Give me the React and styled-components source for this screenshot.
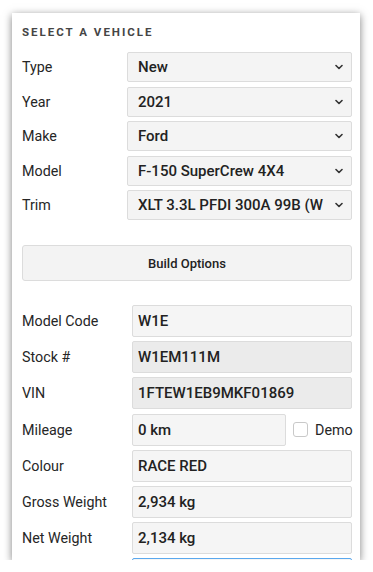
import React from "react";
import styled, { createGlobalStyle } from "styled-components";

const Global = createGlobalStyle`
  html, body { margin: 0; padding: 0; background: #ffffff; }
  body { font-family: Roboto, "Liberation Sans", sans-serif; color: #222; }
  * { box-sizing: border-box; }
`;

const Card = styled.div`
  margin: 13px 0 0 12px;
  width: 348px;
  height: 547px;
  overflow: hidden;
  background: #fff;
  box-shadow: 0 2px 8px rgba(0, 0, 0, 0.5);
  padding: 0 8px 0 10px;
`;

const Heading = styled.h2`
  margin: 13px 0 0 0;
  font-size: 11.5px;
  line-height: 13px;
  font-weight: 700;
  letter-spacing: 2px;
  color: #454545;
  text-transform: uppercase;
`;

const SelectGroup = styled.div`
  margin-top: 13px;
  display: flex;
  flex-direction: column;
  gap: 4.5px;
`;

const Row = styled.div`
  display: grid;
  grid-template-columns: ${(p) => p.$labelWidth}px minmax(0, 1fr);
  align-items: center;
`;

const Label = styled.label`
  font-size: 14.3px;
  color: #262626;
`;

const FakeSelect = styled.div`
  height: 30px;
  display: flex;
  align-items: center;
  background: #f4f4f4;
  border: 1px solid #dcdcdc;
  border-radius: 2px;
  padding: 0 8px 0 10px;
  gap: 6px;
  min-width: 0;
`;

const SelectValue = styled.span`
  flex: 1;
  min-width: 0;
  overflow: hidden;
  white-space: nowrap;
  font-size: 15px;
  font-weight: 500;
  color: #222;
`;

const Chevron = () => (
  <svg width="8" height="6" viewBox="0 0 8 6" aria-hidden="true" style={{ flex: "none" }}>
    <path d="M1 1.5 L4 4.5 L7 1.5" fill="none" stroke="#333" strokeWidth="1.6" strokeLinecap="round" strokeLinejoin="round" />
  </svg>
);

const BuildButton = styled.button`
  margin-top: 25px;
  width: 100%;
  height: 36px;
  background: #f3f3f3;
  border: 1px solid #dcdcdc;
  border-radius: 3px;
  font-family: Roboto, "Liberation Sans", sans-serif;
  font-size: 13px;
  font-weight: 500;
  color: #222;
  cursor: pointer;
`;

const FieldGroup = styled.div`
  margin-top: 24px;
  display: flex;
  flex-direction: column;
  gap: 4.2px;
`;

const Input = styled.input`
  width: 100%;
  height: 32px;
  background: ${(p) => (p.readOnly ? "#ebebeb" : "#f5f5f5")};
  border: 1px solid ${(p) => (p.$focused ? "#5aa8ee" : "#dcdcdc")};
  border-radius: 2px;
  padding: 0 5px;
  font-family: Roboto, "Liberation Sans", sans-serif;
  font-size: 15px;
  font-weight: 500;
  color: #222;
  outline: none;
`;

const InlineField = styled.div`
  display: flex;
  align-items: center;
  gap: 7px;
`;

const NarrowInput = styled(Input)`
  width: 154px;
  flex: none;
`;

const Check = styled.span`
  width: 15px;
  height: 15px;
  border: 1px solid #c9c9c9;
  border-radius: 3px;
  background: #fff;
  flex: none;
`;

const CheckLabel = styled.span`
  font-size: 14.3px;
  color: #262626;
`;

const selects = [
  ["Type", "New"],
  ["Year", "2021"],
  ["Make", "Ford"],
  ["Model", "F-150 SuperCrew 4X4"],
  ["Trim", "XLT 3.3L PFDI 300A 99B (W"],
];

const fields = [
  ["Model Code", "W1E", false],
  ["Stock #", "W1EM111M", true],
  ["VIN", "1FTEW1EB9MKF01869", true],
];

const lowerFields = [
  ["Colour", "RACE RED"],
  ["Gross Weight", "2,934 kg"],
  ["Net Weight", "2,134 kg"],
];

export default function App() {
  return (
    <>
      <Global />
      <Card>
        <Heading>Select a Vehicle</Heading>
        <SelectGroup>
          {selects.map(([l, v]) => (
            <Row key={l} $labelWidth={105}>
              <Label>{l}</Label>
              <FakeSelect>
                <SelectValue>{v}</SelectValue>
                <Chevron />
              </FakeSelect>
            </Row>
          ))}
        </SelectGroup>
        <BuildButton>Build Options</BuildButton>
        <FieldGroup>
          {fields.map(([l, v, ro]) => (
            <Row key={l} $labelWidth={110}>
              <Label>{l}</Label>
              <Input readOnly={ro} defaultValue={v} />
            </Row>
          ))}
          <Row $labelWidth={110}>
            <Label>Mileage</Label>
            <InlineField>
              <NarrowInput defaultValue="0 km" />
              <Check />
              <CheckLabel>Demo</CheckLabel>
            </InlineField>
          </Row>
          {lowerFields.map(([l, v]) => (
            <Row key={l} $labelWidth={110}>
              <Label>{l}</Label>
              <Input defaultValue={v} />
            </Row>
          ))}
          <Row $labelWidth={110}>
            <Label />
            <Input $focused defaultValue="" />
          </Row>
        </FieldGroup>
      </Card>
    </>
  );
}
